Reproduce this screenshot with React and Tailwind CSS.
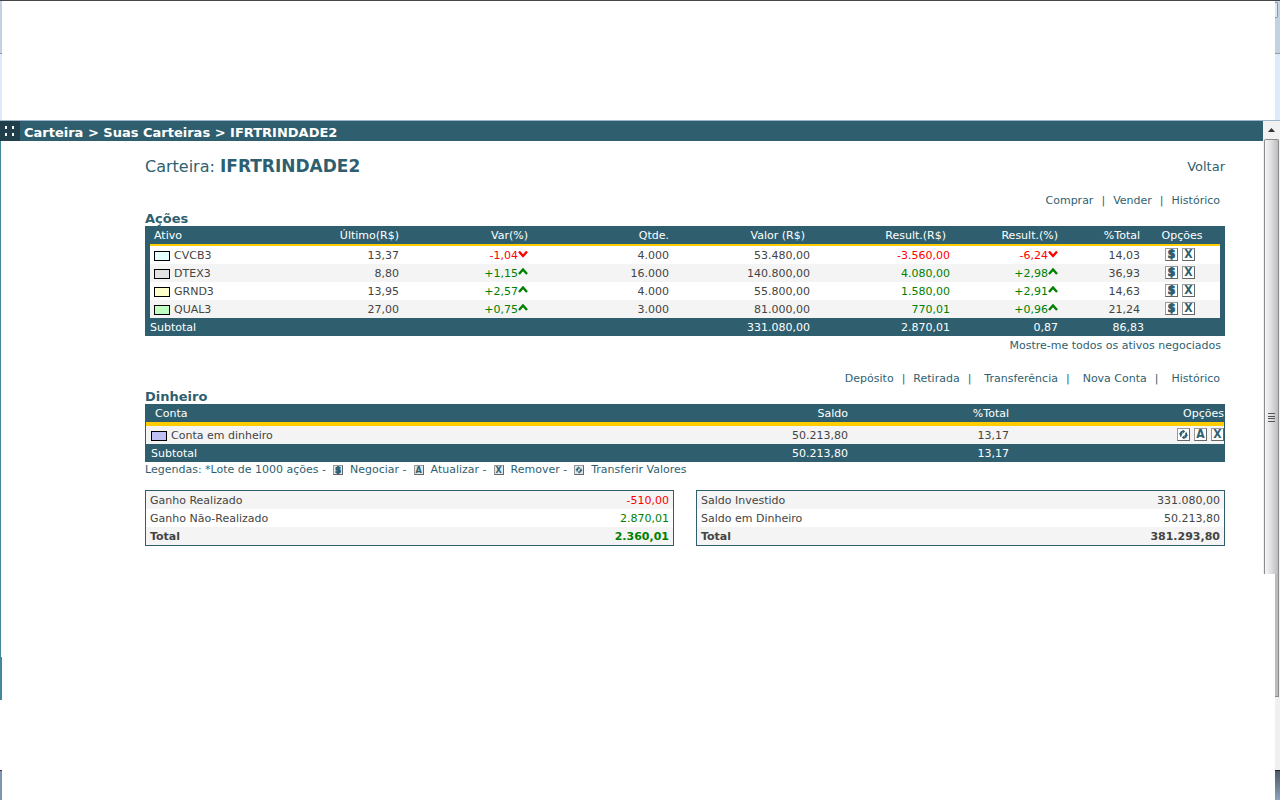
import { clsx } from "clsx";

const stocks = [
  { name: "CVCB3", color: "bg-[#e6ffff]", last: "13,37", change: "-1,04", qty: "4.000", value: "53.480,00", result: "-3.560,00", resultPct: "-6,24", total: "14,03" },
  { name: "DTEX3", color: "bg-[#e1e1e6]", last: "8,80", change: "+1,15", qty: "16.000", value: "140.800,00", result: "4.080,00", resultPct: "+2,98", total: "36,93" },
  { name: "GRND3", color: "bg-[#ffffcc]", last: "13,95", change: "+2,57", qty: "4.000", value: "55.800,00", result: "1.580,00", resultPct: "+2,91", total: "14,63" },
  { name: "QUAL3", color: "bg-[#c1ffc1]", last: "27,00", change: "+0,75", qty: "3.000", value: "81.000,00", result: "770,01", resultPct: "+0,96", total: "21,24" },
];

const gains = [
  { label: "Ganho Realizado", value: "-510,00" },
  { label: "Ganho Não-Realizado", value: "2.870,01" },
  { label: "Total", value: "2.360,01" },
];

const balances = [
  { label: "Saldo Investido", value: "331.080,00" },
  { label: "Saldo em Dinheiro", value: "50.213,80" },
  { label: "Total", value: "381.293,80" },
];

const signColor = (value) =>
  value.startsWith("-") ? "text-[#ff0000]" : "text-[#008000]";

const Arrow = ({ down }) => (
  <svg width="10" height="9" viewBox="0 0 10 9" className="inline-block align-baseline">
    <path
      d={down ? "M1 1.5 L5 6 L9 1.5" : "M1 6 L5 1.5 L9 6"}
      fill="none"
      stroke="currentColor"
      strokeWidth="2.4"
    />
  </svg>
);

const Refresh = () => (
  <svg viewBox="0 0 11 11" className="w-full h-full">
    <path d="M2.8 7.6 V4.5 Q2.8 2.5 5 2.5" fill="none" stroke="#2f5f6f" strokeWidth="1.7" />
    <path d="M4.6 0.4 L7.2 2.6 L4.6 4.8 Z" fill="#2f5f6f" />
    <path d="M0.6 4.2 H5 L2.8 6.4 Z" fill="#2f5f6f" />
    <path d="M8.2 3.4 V6.5 Q8.2 8.5 6 8.5" fill="none" stroke="#2f5f6f" strokeWidth="1.7" />
    <path d="M6.4 6.2 L3.8 8.4 L6.4 10.6 Z" fill="#2f5f6f" />
    <path d="M6 6.8 H10.4 L8.2 4.6 Z" fill="#2f5f6f" />
  </svg>
);

const Glyph = ({ type, small }) => (
  <span
    className={clsx(
      "inline-flex items-center justify-center overflow-hidden border border-t-[#999999] border-l-[#999999] border-r-[#666666] border-b-[#666666] font-bold text-[#2f5f6f] font-['DejaVu_Sans_Condensed','DejaVu_Sans',sans-serif]",
      small
        ? "w-[10px] h-[10px] text-[9px] leading-[8px] bg-[#dfe8eb]"
        : "w-[13px] h-[13px] text-[12px] leading-[11px] bg-white",
      type === "$" && "[-webkit-text-stroke:1px_#2f5f6f]"
    )}
  >
    {type === "refresh" ? <Refresh /> : type}
  </span>
);

const IconButton = ({ type, label }) => (
  <button aria-label={label} className="flex cursor-pointer">
    <Glyph type={type} />
  </button>
);

const Swatch = ({ color }) => (
  <span className={clsx("w-4 h-[10px] border border-black", color)}></span>
);

const Separator = ({ wide }) => (
  <span className={clsx("ml-2", wide ? "mr-[13px]" : "mr-2")}>|</span>
);

const Summary = ({ rows, colored }) => (
  <div className="flex-1 border border-[#2f5f6f]">
    <table className="w-full text-[#444444]">
      <tbody>
        {rows.map((row, idx) => (
          <tr
            key={row.label}
            className={clsx("h-[18px] odd:bg-[#f4f4f4]", idx === 2 && "font-bold")}
          >
            <td className="pl-1 pt-px">{row.label}</td>
            <td className={clsx("pr-1 pt-px text-right", colored && signColor(row.value))}>
              {row.value}
            </td>
          </tr>
        ))}
      </tbody>
    </table>
  </div>
);

const StocksTable = () => (
  <div className="bg-[#2f5f6f] px-[5px]">
    <table className="w-full table-fixed border-separate border-spacing-0 text-right text-[#444444]">
      <colgroup>
        <col className="w-[130px]" />
        <col className="w-[119px]" />
        <col className="w-[129px]" />
        <col className="w-[141px]" />
        <col className="w-[141px]" />
        <col className="w-[140px]" />
        <col className="w-[108px]" />
        <col className="w-[86px]" />
        <col className="w-[76px]" />
      </colgroup>
      <thead className="text-white">
        <tr className="h-5 *:font-normal *:pt-px *:border-b-2 *:border-[#ffcc00]">
          <th className="pl-1 text-left">Ativo</th>
          <th>Último(R$)</th>
          <th>Var(%)</th>
          <th>Qtde.</th>
          <th className="pr-[5px]">Valor (R$)</th>
          <th className="pr-1">Result.(R$)</th>
          <th>Result.(%)</th>
          <th className="pr-1">%Total</th>
          <th className="text-center">Opções</th>
        </tr>
      </thead>
      <tbody>
        {stocks.map((stock) => (
          <tr key={stock.name} className="h-[18px] bg-white even:bg-[#f4f4f4] *:pt-px">
            <td>
              <div className="flex items-center gap-1 pl-1">
                <Swatch color={stock.color} />
                {stock.name}
              </div>
            </td>
            <td>{stock.last}</td>
            <td className={signColor(stock.change)}>
              {stock.change}
              <Arrow down={stock.change.startsWith("-")} />
            </td>
            <td>{stock.qty}</td>
            <td>{stock.value}</td>
            <td className={signColor(stock.result)}>{stock.result}</td>
            <td className={signColor(stock.resultPct)}>
              {stock.resultPct}
              <Arrow down={stock.resultPct.startsWith("-")} />
            </td>
            <td className="pr-1">{stock.total}</td>
            <td>
              <div className="flex gap-1 justify-center pr-1 pb-[3px]">
                <IconButton type="$" label={`Negociar ${stock.name}`} />
                <IconButton type="X" label={`Remover ${stock.name}`} />
              </div>
            </td>
          </tr>
        ))}
      </tbody>
      <tfoot className="text-white">
        <tr className="h-[18px] *:pt-px">
          <td className="text-left">Subtotal</td>
          <td colSpan="3"></td>
          <td>331.080,00</td>
          <td>2.870,01</td>
          <td>0,87</td>
          <td>86,83</td>
          <td></td>
        </tr>
      </tfoot>
    </table>
  </div>
);

const CashTable = () => (
  <div className="bg-[#2f5f6f] px-px">
    <table className="w-full table-fixed border-separate border-spacing-0 text-right text-[#444444]">
      <colgroup>
        <col className="w-[541px]" />
        <col className="w-[161px]" />
        <col className="w-[161px]" />
        <col className="w-[215px]" />
      </colgroup>
      <thead className="text-white">
        <tr className="h-[22px] *:font-normal *:pt-px *:border-b-4 *:border-[#ffcc00]">
          <th className="pl-[9px] text-left">Conta</th>
          <th>Saldo</th>
          <th>%Total</th>
          <th>Opções</th>
        </tr>
      </thead>
      <tbody>
        <tr className="h-[18px] bg-[#f4f4f4] *:pt-px">
          <td>
            <div className="flex items-center gap-1 pl-[5px]">
              <Swatch color="bg-[#c0c0f4]" />
              Conta em dinheiro
            </div>
          </td>
          <td>50.213,80</td>
          <td>13,17</td>
          <td>
            <div className="flex gap-1 justify-end pb-[3px]">
              <IconButton type="refresh" label="Transferir valores" />
              <IconButton type="A" label="Atualizar" />
              <IconButton type="X" label="Remover" />
            </div>
          </td>
        </tr>
      </tbody>
      <tfoot className="text-white">
        <tr className="h-[18px] *:pt-px">
          <td className="pl-[5px] text-left">Subtotal</td>
          <td>50.213,80</td>
          <td>13,17</td>
          <td></td>
        </tr>
      </tfoot>
    </table>
  </div>
);

const Legend = () => (
  <div className="flex items-center gap-[7px] h-4">
    <span>Legendas: *Lote de 1000 ações -</span>
    <Glyph type="$" small />
    <span>Negociar -</span>
    <Glyph type="A" small />
    <span>Atualizar -</span>
    <Glyph type="X" small />
    <span>Remover -</span>
    <Glyph type="refresh" small />
    <span>Transferir Valores</span>
  </div>
);

const ScrollBar = () => (
  <div className="flex flex-col items-end w-[17px] shrink-0">
    <div className="w-full h-[18px] bg-[#f1f1f1] flex items-center justify-center">
      <svg width="7" height="4" viewBox="0 0 7 4">
        <path d="M0 4 L3.5 0 L7 4 Z" fill="#333333" />
      </svg>
    </div>
    <div className="w-full h-[435px] bg-[#f1f1f1] px-px">
      <div className="h-full border border-b-0 border-[#8c8c8c] rounded-t-xs bg-linear-to-r from-[#f5f5f5] via-[#dddde0] to-[#bcbcc0] pt-[273px]">
        <div className="w-[7px] h-[9px] ml-[3px] flex flex-col justify-between">
          <div className="h-px bg-[#555555]"></div>
          <div className="h-px bg-[#555555]"></div>
          <div className="h-px bg-[#555555]"></div>
          <div className="h-px bg-[#555555]"></div>
        </div>
      </div>
    </div>
    <div className="w-[5px] h-[123px] bg-[#f1f1f1] pr-px">
      <div className="h-full bg-[#bcbcc0] border-r border-b border-[#8c8c8c]"></div>
    </div>
    <div className="w-[5px] flex-1 bg-[#f0f0f0]"></div>
  </div>
);

const App = () => {
  return (
    <div className="min-h-screen flex flex-col bg-white border-t border-[#464646] font-['DejaVu_Sans',Verdana,sans-serif] text-[11px] leading-4 text-[#2f5f6f]">
      {/* Window frame */}
      <div className="h-[120px] flex justify-between border-b border-[#9db4c8]">
        <div className="w-[2px] flex flex-col">
          <div className="h-[53px] bg-[#c3d2e1] border-b border-[#8e9aa5]"></div>
          <div className="flex-1 bg-[#dceafa]"></div>
        </div>
        <div className="w-[5px] flex flex-col">
          <div className="h-[53px] bg-[#c3d2e1] border-b border-[#8e9aa5] pt-px">
            <div className="w-[3px] h-4 bg-[#dce8f4] border border-l-0 border-[#7f95b8] rounded-r-xs"></div>
          </div>
          <div className="flex-1 bg-[#dceafa]"></div>
        </div>
      </div>

      <div className="flex-1 flex">
        <div className="flex-1 flex flex-col">
          {/* Breadcrumb */}
          <header className="h-5 flex bg-[#2f5f6f] text-white">
            <div className="w-5 bg-[#203f4a] flex items-center pl-[5px]">
              <svg width="9" height="10" viewBox="0 0 9 10" fill="white">
                <path d="M0 0h2v3h-2z M7 0h2v3h-2z M0 7h2v3h-2z M7 7h2v3h-2z" />
              </svg>
            </div>
            <h1 className="pl-1 pt-[2px] text-[13px] leading-5 font-bold">
              Carteira &gt; Suas Carteiras &gt; IFRTRINDADE2
            </h1>
          </header>

          <div className="flex-1 flex">
            <div className="w-[2px] flex flex-col">
              <div className="w-px h-[516px] bg-[#42879c]"></div>
              <div className="h-[43px] bg-[#42879c]"></div>
            </div>

            <main className="flex-1 pl-[143px] pr-[38px] pt-[15px]">
              <div className="flex items-center justify-between h-5">
                <h2 className="text-[16px]">
                  Carteira: <b className="text-[17px]">IFRTRINDADE2</b>
                </h2>
                <a href="#voltar" className="text-[13px] pt-px">Voltar</a>
              </div>

              <nav className="flex justify-end pr-[5px] mt-[17px]">
                <a href="#comprar">Comprar</a>
                <Separator />
                <a href="#vender">Vender</a>
                <Separator />
                <a href="#historico">Histórico</a>
              </nav>
              <h3 className="mt-[2px] text-[13px] leading-[15px] font-bold">Ações</h3>
              <StocksTable />
              <div className="text-right pr-1 mt-[2px]">
                <a href="#ativos">Mostre-me todos os ativos negociados</a>
              </div>

              <nav className="flex justify-end pr-[5px] mt-[17px]">
                <a href="#deposito">Depósito</a>
                <Separator />
                <a href="#retirada">Retirada</a>
                <Separator wide />
                <a href="#transferencia">Transferência</a>
                <Separator wide />
                <a href="#nova-conta">Nova Conta</a>
                <Separator wide />
                <a href="#historico-dinheiro">Histórico</a>
              </nav>
              <h3 className="mt-[2px] text-[13px] leading-[15px] font-bold">Dinheiro</h3>
              <CashTable />
              <Legend />

              <div className="flex gap-[22px] mt-3">
                <Summary rows={gains} colored />
                <Summary rows={balances} />
              </div>
            </main>
          </div>
        </div>
        <ScrollBar />
      </div>

      {/* Taskbar */}
      <div className="h-[30px] flex justify-between">
        <div className="w-[2px] bg-[#7f93b2] border-t border-[#333a44]"></div>
        <div className="w-[5px] bg-linear-to-b from-[#4e5a66] to-[#8ea3bd] border-t border-[#22262c]"></div>
      </div>
    </div>
  );
};

export default App;
